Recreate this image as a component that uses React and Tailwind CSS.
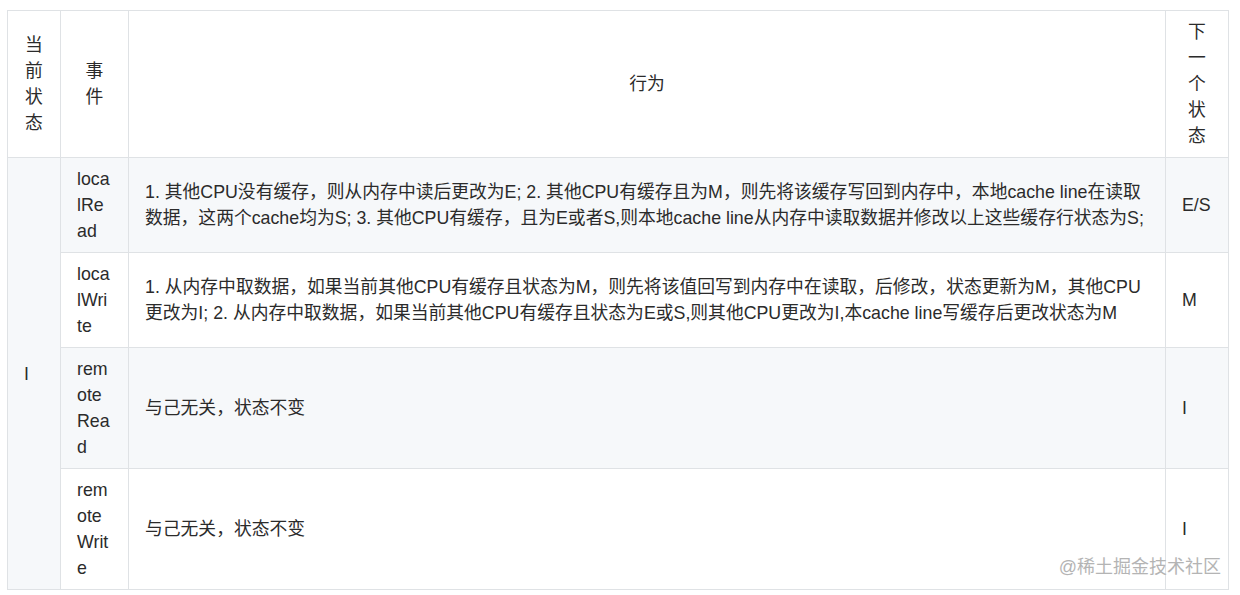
import React from 'react';

const rows = [
  {
    event: 'localRead',
    action: [
      '1. 其他CPU没有缓存，则从内存中读后更改为E; 2. 其他CPU有缓存且为M，则先将该缓存写回到内存中，本地cache line在读取',
      '数据，这两个cache均为S; 3. 其他CPU有缓存，且为E或者S,则本地cache line从内存中读取数据并修改以上这些缓存行状态为S;',
    ],
    next: 'E/S',
  },
  {
    event: 'localWrite',
    action: [
      '1. 从内存中取数据，如果当前其他CPU有缓存且状态为M，则先将该值回写到内存中在读取，后修改，状态更新为M，其他CPU',
      '更改为I; 2. 从内存中取数据，如果当前其他CPU有缓存且状态为E或S,则其他CPU更改为I,本cache line写缓存后更改状态为M',
    ],
    next: 'M',
  },
  { event: 'remoteRead', action: ['与己无关，状态不变'], next: 'I' },
  { event: 'remoteWrite', action: ['与己无关，状态不变'], next: 'I' },
];

export default function App() {
  const cell = 'border border-[#dfe2e5] px-[16px] py-[8px]';

  return (
    <div
      className="relative w-[1240px] h-[595px] bg-white pl-[7px] pt-[10px] text-[17.8px] leading-[26px] text-[#2b2b2b] overflow-hidden"
      style={{ fontFamily: '"Liberation Sans", "Noto Sans CJK SC", sans-serif' }}
    >
      <table className="table-fixed border-collapse w-[1222px]">
        <colgroup>
          <col className="w-[53px]" />
          <col className="w-[68px]" />
          <col className="w-[1037px]" />
          <col className="w-[63px]" />
        </colgroup>
        <thead>
          <tr className="bg-white">
            <th className={`${cell} font-normal text-center`}>当前状态</th>
            <th className={`${cell} font-normal text-center`}>事件</th>
            <th className={`${cell} font-normal text-center`}>行为</th>
            <th className={`${cell} font-normal text-center`}>下一个状态</th>
          </tr>
        </thead>
        <tbody>
          {rows.map((r, i) => (
            <tr key={r.event} className={i % 2 === 0 ? 'bg-[#f6f8fa]' : 'bg-white'}>
              {i === 0 && (
                <td rowSpan={4} className={`${cell} bg-[#f6f8fa]`}>I</td>
              )}
              <td className={`${cell} break-all`}>{r.event}</td>
              <td className={`${cell} whitespace-nowrap`}>
                {r.action.map((line, j) => (
                  <React.Fragment key={j}>
                    {j > 0 && <br />}
                    {line}
                  </React.Fragment>
                ))}
              </td>
              <td className={`${cell} whitespace-nowrap`}>{r.next}</td>
            </tr>
          ))}
        </tbody>
      </table>

      {/* watermark */}
      <div className="absolute right-[19px] top-[555px] text-[18px] leading-[24px] text-[#b4b4b4]">
        @稀土掘金技术社区
      </div>
    </div>
  );
}
